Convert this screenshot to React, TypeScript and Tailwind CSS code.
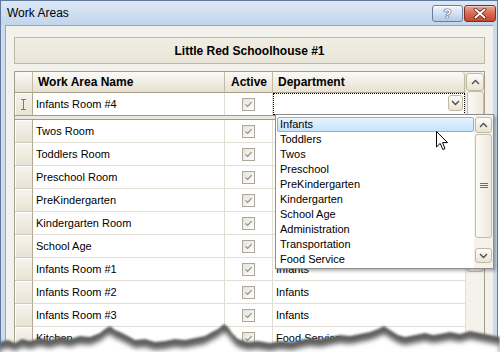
import React from "react";

const rows: [string, string][] = [
  ["Twos Room", ""],
  ["Toddlers Room", ""],
  ["Preschool Room", ""],
  ["PreKindergarten", ""],
  ["Kindergarten Room", ""],
  ["School Age", ""],
  ["Infants Room #1", "Infants"],
  ["Infants Room #2", "Infants"],
  ["Infants Room #3", "Infants"],
  ["Kitchen", "Food Service"],
  ["", ""],
];

const items = [
  "Infants",
  "Toddlers",
  "Twos",
  "Preschool",
  "PreKindergarten",
  "Kindergarten",
  "School Age",
  "Administration",
  "Transportation",
  "Food Service",
];

function Check() {
  return (
    <div className="w-[13px] h-[13px] border border-[#aca899] bg-linear-to-br from-[#e4e2da] to-white flex items-center justify-center">
      <svg width="9" height="9" viewBox="0 0 9 9">
        <path d="M1.5 4.3 L3.6 6.4 L7.6 2.2" stroke="#8c8c8c" strokeWidth="1.2" fill="none" />
      </svg>
    </div>
  );
}

function Chevron({ up = false }: { up?: boolean }) {
  return (
    <svg width="9" height="6" viewBox="0 0 9 6">
      <path
        d={up ? "M1 5 L4.5 1.5 L8 5" : "M1 1 L4.5 4.5 L8 1"}
        stroke="#4a4a4a"
        strokeWidth="1.3"
        fill="none"
      />
    </svg>
  );
}

const btn =
  "rounded-[3px] border border-[#c2b9a4] bg-linear-to-b from-[#fdfcf8] to-[#e9e3d3] flex items-center justify-center";

function RowHeader({ children }: { children?: React.ReactNode }) {
  return (
    <div className="w-[18px] shrink-0 border-r border-b border-r-[#b3aa96] border-b-[#d3ccba] bg-linear-to-b from-[#f6f4ed] to-[#e8e3d4] shadow-[inset_1px_1px_0_#ffffff] flex items-center justify-center">
      {children}
    </div>
  );
}

const edge: [number, number][] = [
  [0, 342], [8, 340], [15, 343], [22, 339], [30, 341], [40, 338], [50, 340], [60, 337], [70, 339],
  [80, 336], [90, 337], [100, 333], [105, 329], [110, 326], [115, 330], [120, 332], [128, 336],
  [135, 340], [145, 339], [155, 342], [165, 341], [175, 339], [185, 340], [195, 338], [205, 336],
  [212, 332], [218, 329], [224, 324], [228, 327], [232, 333], [238, 339], [248, 342], [258, 341],
  [270, 343], [280, 341], [292, 342], [300, 340], [310, 338], [320, 339], [330, 337], [340, 335],
  [350, 336], [360, 334], [370, 332], [378, 329], [384, 326], [390, 330], [398, 335], [405, 337],
  [415, 335], [425, 333], [433, 335], [440, 334], [450, 332], [460, 334], [470, 331], [480, 333],
  [490, 335], [500, 337],
];

function Torn() {
  const top = 312;
  const pts = edge.map(([x, y]) => `${x},${y - top}`).join(" ");
  const poly = `${pts} 500,60 0,60`;
  const pts2 = edge.map(([x, y]) => `${x},${y - top + 8}`).join(" ");
  const poly2 = `${pts2} 500,60 0,60`;
  return (
    <svg className="absolute left-0 top-[312px]" width="500" height="44" viewBox="0 0 500 44">
      <defs>
        <filter id="b1" x="-5%" y="-50%" width="110%" height="200%">
          <feGaussianBlur stdDeviation="1.3" />
        </filter>
        <filter id="b2" x="-5%" y="-50%" width="110%" height="200%">
          <feGaussianBlur stdDeviation="2.4" />
        </filter>
      </defs>
      <polygon points={poly} fill="#5e5e5e" filter="url(#b1)" />
      <polygon points={poly2} fill="#ffffff" filter="url(#b2)" />
      <rect x="0" y="40" width="500" height="4" fill="#ffffff" />
    </svg>
  );
}

export default function App() {
  return (
    <div className="relative w-[500px] h-[356px] overflow-hidden bg-white font-['Liberation_Sans',Arial,sans-serif] text-black">
      <div className="w-[498px] h-[380px] flex flex-col border border-[#5f7a9e] bg-[#cddbed]">
        {/* title bar */}
        <div className="h-[24px] shrink-0 flex items-start bg-linear-to-b from-[#dde8f5] to-[#c3d5ec]">
          <div className="pl-[6px] pt-[5px] text-[12px] leading-[14px]">Work Areas</div>
          <div className="ml-auto mt-[4px] mr-[1px] flex gap-[1px]">
            <div className="w-[31px] h-[17px] rounded-[3px] border border-[#6b7f9c] bg-linear-to-b from-[#eef4fb] via-[#d3e1f1] to-[#b4c9e3] flex items-center justify-center shadow-[inset_0_1px_0_#ffffff]">
              <span className="text-[13px] font-bold leading-none text-white [text-shadow:0_0_1px_#2b3a55,0_0_1px_#2b3a55,0_0_1px_#2b3a55]">?</span>
            </div>
            <div className="w-[32px] h-[17px] rounded-[3px] border border-[#7e2f22] bg-linear-to-b from-[#eba497] via-[#d96a52] to-[#c2462c] flex items-center justify-center shadow-[inset_0_1px_0_#f6c8bd]">
              <svg width="14" height="11" viewBox="0 0 14 11">
                <path d="M2.5 1.5 L11.5 9.5 M11.5 1.5 L2.5 9.5" stroke="#5a1d12" strokeWidth="3.6" strokeLinecap="round" />
                <path d="M2.5 1.5 L11.5 9.5 M11.5 1.5 L2.5 9.5" stroke="#ffffff" strokeWidth="2" strokeLinecap="round" />
              </svg>
            </div>
          </div>
        </div>

        {/* client */}
        <div className="ml-[4px] w-[488px] flex-1 border-l border-t border-[#92a6c0] bg-[#f3f1eb] pl-[8px] pt-[11px]">
          <div className="w-[471px] h-[27px] border border-[#c0b7a3] bg-linear-to-b from-[#f0ede3] to-[#e9e5d8] flex items-center justify-center">
            <span className="text-[12px] font-bold">Little Red Schoolhouse #1</span>
          </div>

          <div className="mt-[7px] w-[471px] h-[300px] border border-[#a79e8a] bg-white flex overflow-hidden">
            {/* table */}
            <div className="w-[450px] flex flex-col text-[11px]">
              {/* header */}
              <div className="h-[21px] flex shrink-0 bg-[#f3f1ea]">
                <div className="w-[18px] rounded-tl-[4px] border-r border-b border-r-[#c4bba7] border-b-[#a69d89] bg-linear-to-b from-[#fbfaf6] to-[#e7e1d2]" />
                <div className="w-[192px] pl-[5px] flex items-center border-r border-b border-r-[#c4bba7] border-b-[#a69d89] bg-linear-to-b from-[#fbfaf6] to-[#e7e1d2] text-[12px] font-bold">
                  Work Area Name
                </div>
                <div className="w-[48px] pl-[6px] flex items-center border-r border-b border-r-[#c4bba7] border-b-[#a69d89] bg-linear-to-b from-[#fbfaf6] to-[#e7e1d2] text-[12px] font-bold">
                  Active
                </div>
                <div className="w-[192px] pl-[5px] rounded-tr-[4px] flex items-center border-r border-b border-r-[#c4bba7] border-b-[#a69d89] bg-linear-to-b from-[#fbfaf6] to-[#e7e1d2] text-[12px] font-bold">
                  Department
                </div>
              </div>

              {/* current row */}
              <div className="h-[22px] flex shrink-0">
                <div className="w-[18px] shrink-0 border-r border-r-[#b3aa96] bg-linear-to-b from-[#f6f4ed] to-[#e8e3d4] shadow-[inset_1px_1px_0_#ffffff] flex items-center justify-center">
                  <svg width="7" height="11" viewBox="0 0 7 11">
                    <path d="M1 0.5 H6 M1 10.5 H6 M3.5 0.5 V10.5" stroke="#7d7a70" strokeWidth="1" fill="none" />
                  </svg>
                </div>
                <div className="w-[192px] pl-[3px] flex items-center border-r border-[#e2ded3]">Infants Room #4</div>
                <div className="w-[48px] flex items-center justify-center border-r border-[#e2ded3]">
                  <Check />
                </div>
                <div className="w-[192px] border border-dotted border-black relative">
                  <div className={`absolute right-[1px] top-[1px] w-[15px] h-[16px] ${btn}`}>
                    <Chevron />
                  </div>
                </div>
              </div>

              {/* frozen separator */}
              <div className="h-[5px] shrink-0 border-y border-[#a49b88] bg-[#ebe8de]" />

              {rows.map(([name, dept], i) => (
                <div key={i} className="h-[23px] flex shrink-0">
                  <RowHeader />
                  <div className="w-[192px] pl-[3px] flex items-center border-r border-b border-[#e2ded3]">{name}</div>
                  <div className="w-[48px] flex items-center justify-center border-r border-b border-[#e2ded3]">
                    {name && <Check />}
                  </div>
                  <div className="w-[192px] pl-[3px] flex items-center border-b border-[#e2ded3]">{dept}</div>
                </div>
              ))}
            </div>

            {/* scrollbar */}
            <div className="w-[19px] bg-[#f4f2eb] border-l border-[#e3dfd4] flex flex-col items-center pt-[1px]">
              <div className={`w-[18px] h-[18px] ${btn}`}>
                <Chevron up />
              </div>
              <div className="w-[17px] h-[181px] rounded-[3px] border border-[#c7bea9] bg-linear-to-r from-[#fbfaf5] to-[#eee9dc]" />
            </div>
          </div>
        </div>
      </div>

      {/* dropdown list */}
      <div className="absolute left-[275px] top-[114px] w-[219px] h-[155px] border border-[#8f8f8f] bg-white flex shadow-[2px_2px_3px_rgba(0,0,0,0.3)] text-[11px]">
        <div className="flex-1 pt-[2px] pl-[1px] flex flex-col">
          {items.map((it, i) => (
            <div
              key={it}
              className={
                i === 0
                  ? "h-[15px] pl-[2px] flex items-center border border-[#7eb4ea] rounded-[2px] bg-linear-to-b from-[#eaf4fe] to-[#c6e2fb]"
                  : "h-[15px] pl-[3px] flex items-center"
              }
            >
              {it}
            </div>
          ))}
        </div>
        <div className="w-[19px] pt-[2px] pb-[5px] flex flex-col items-center bg-[#f4f2eb]">
          <div className={`w-[17px] h-[16px] ${btn}`}>
            <Chevron up />
          </div>
          <div className="mt-[1px] w-[17px] h-[104px] rounded-[3px] border border-[#c7bea9] bg-linear-to-r from-[#fbfaf5] to-[#eee9dc] flex items-center justify-center">
            <svg width="8" height="6" viewBox="0 0 8 6">
              <path d="M0 0.5 H8 M0 2.5 H8 M0 4.5 H8" stroke="#6e6e6e" strokeWidth="1" />
            </svg>
          </div>
          <div className={`mt-auto w-[17px] h-[15px] ${btn}`}>
            <Chevron />
          </div>
        </div>
      </div>

      {/* mouse cursor */}
      <svg className="absolute left-[436px] top-[131px]" width="13" height="20" viewBox="0 0 13 20">
        <path
          d="M0.5 0.5 L0.5 16 L4.2 12.4 L6.8 18.5 L9 17.6 L6.5 11.6 L11.5 11.6 Z"
          fill="#ffffff"
          stroke="#000000"
          strokeWidth="1"
          strokeLinejoin="miter"
        />
      </svg>

      <Torn />
    </div>
  );
}
